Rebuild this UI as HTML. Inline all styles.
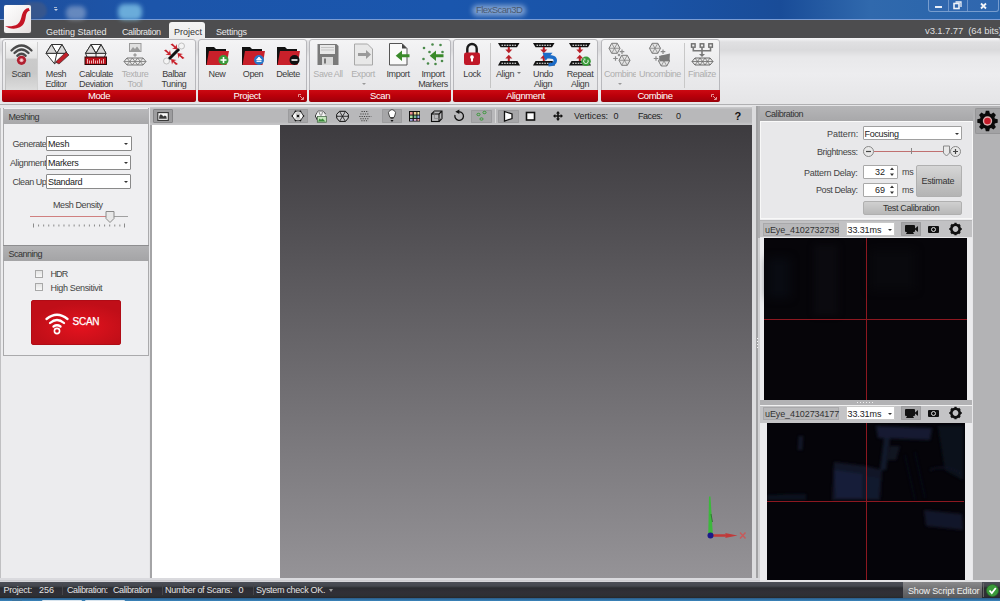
<!DOCTYPE html>
<html><head><meta charset="utf-8">
<style>
*{margin:0;padding:0;box-sizing:border-box}
html,body{width:1000px;height:601px;overflow:hidden;background:#c8c8c8;font-family:"Liberation Sans",sans-serif;font-size:10px;color:#333}
.a{position:absolute}
.t{white-space:nowrap;line-height:12px}
#title{left:0;top:0;width:1000px;height:20px;background:linear-gradient(90deg,#1f4f9c 0%,#1c55aa 15%,#1a56ad 45%,#1a53a6 65%,#194c98 78%,#3069ad 87%,#2864ab 100%);border-bottom:1px solid #7a9cd4}
#tabs{left:0;top:20px;width:1000px;height:18px;background:#4d4d4f}
#ribbon{left:0;top:37.5px;width:1000px;height:67px;border-radius:3px 3px 0 0;background:linear-gradient(#f6f6f8 0,#e0e0e2 4px,#dadadc 12px,#e8e8ea 19px,#ededef 36px,#e6e6e8 62px)}
.grp{border:1px solid #b8b8bc;border-radius:3px;background:linear-gradient(#f4f4f5,#ececee 40%,#e4e4e6)}
.rbar{background:linear-gradient(#cc0a12,#bc000a 45%,#a8000a 80%,#960008);border-radius:0 0 2px 2px}
#below{left:0;top:104px;width:1000px;height:4px;background:#e6e6e8;border-top:1px solid #b0b0b2}
#left{left:0;top:108px;width:150px;height:473px;background:#ececee;border-left:1.5px solid #c0c0c2}
#tb{left:150px;top:107px;width:602px;height:18px;background:linear-gradient(#c8c8ca 0,#c8c8ca 1px,#b8b8ba 2px,#b8b8ba 15px,#c4c4c6 17px)}
#white{left:151.5px;top:125px;width:128.5px;height:453px;background:#fff}
#vp{left:280px;top:125px;width:472px;height:453px;background:linear-gradient(#3d3b3f,#959397)}
#split{left:752px;top:107px;width:8px;height:474px;background:#c5c5c7}
#right{left:760px;top:106px;width:213px;height:475px;background:#e8e8ea}
#gearcol{left:973px;top:106px;width:27px;height:475px;background:#b3b3b5}
#status{left:0;top:581px;width:1000px;height:17px;background:#2c2c2e;color:#e6e6e6}
#task{left:0;top:598px;width:1000px;height:3px;background:#1d4f7a}
.cb{background:#fff;border:1px solid #8a8a8a;border-radius:1px}
.arr{width:0;height:0;border-left:2px solid transparent;border-right:2px solid transparent;border-top:2px solid #333}
.pb{background:#a6a6a8;border-radius:1px;box-shadow:inset 0 0 0 1px #9c9c9e}
</style></head><body>
<div id="title" class="a"></div>
<div id="tabs" class="a"></div>
<div id="ribbon" class="a"></div>
<!-- TITLE -->
<div class="a" style="left:22px;top:2px;width:25px;height:17px;border-radius:9px;background:rgba(70,90,130,.6);filter:blur(.8px)"></div>
<div class="a" style="left:53.5px;top:9px;width:0;height:0;border-left:2px solid transparent;border-right:2px solid transparent;border-top:2px solid #c8d4e6"></div>
<div class="a" style="left:54px;top:7px;width:3px;height:1px;background:#a8b8d0"></div>
<div class="a" style="left:66px;top:6px;width:20px;height:14px;border-radius:6px;background:rgba(190,205,225,.45);filter:blur(2px)"></div>
<div class="a" style="left:118px;top:4px;width:24px;height:16px;border-radius:6px;background:rgba(140,210,240,.7);filter:blur(2px)"></div>
<div class="a" style="left:472px;top:4.5px;width:54px;height:11px;border-radius:6px;background:rgba(225,235,248,.5);filter:blur(2.5px)"></div>
<div class="a" style="left:476px;top:4px;font-size:9.5px;color:#4a5a70;letter-spacing:-.55px">FlexScan3D</div>
<div class="a" style="left:928px;top:-1px;width:71px;height:13px;border:1px solid rgba(150,180,220,.7);border-top:none;border-radius:0 0 3px 3px;background:rgba(60,110,180,.35)"></div>
<div class="a" style="left:948px;top:0;width:1px;height:11px;background:rgba(150,180,220,.6)"></div>
<div class="a" style="left:967px;top:0;width:1px;height:11px;background:rgba(150,180,220,.6)"></div>
<div class="a" style="left:935px;top:6px;width:7px;height:2px;background:#e8eef8"></div>
<svg class="a" style="left:950px;top:0" width="40" height="12" viewBox="950 0 40 12"><rect x="954" y="3.5" width="5" height="5" fill="none" stroke="#eef2f8" stroke-width="1.6"/><path d="M955.5 2 h5.5 v5" fill="none" stroke="#eef2f8" stroke-width="1.3"/><path d="M981 3.5 L986 8.5 M986 3.5 L981 8.5" stroke="#f2f4f8" stroke-width="1.8"/></svg>
<!-- logo -->
<div class="a" style="left:4px;top:5px;width:27px;height:28px;border-radius:2px;background:linear-gradient(135deg,#fff,#f0eeee 60%,#e4dede);box-shadow:0 0 1px #888"></div>
<svg class="a" style="left:4px;top:5px" width="27" height="28" viewBox="0 0 27 28"><path d="M24.8 3 C21.5 3.3,19.2 5.8,18 9.8 C17 13.5,16.5 16.8,13.5 19.2 C10 21.5,5 21.5,1 21 C4.5 23.5,10.5 24.8,15.8 22.3 C20.3 20,21.2 15.5,21.8 11.5 C22.3 8.2,23.3 6.3,26 5.5 C25.3 5,25 4.2,24.8 3 Z" fill="#c41424"/></svg>
<!-- TABS -->
<div class="a" style="left:46px;top:26.5px;font-size:9px;color:#e8e8e8">Getting Started</div>
<div class="a" style="left:122px;top:26.5px;font-size:9px;color:#e8e8e8;letter-spacing:-.4px">Calibration</div>
<div class="a" style="left:169px;top:22px;width:36px;height:17px;border-radius:3px 3px 0 0;background:linear-gradient(#f4f4f4,#ececec)"></div>
<div class="a" style="left:174px;top:26.5px;font-size:9px;color:#333">Project</div>
<div class="a" style="left:216px;top:26.5px;font-size:9px;color:#e8e8e8;letter-spacing:-.2px">Settings</div>
<div class="a" style="left:925px;top:24.5px;font-size:9.5px;color:#dedede;white-space:pre;letter-spacing:-.1px">v3.1.7.77  (64 bits)</div>

<div class="a grp" style="left:2px;top:39px;width:194px;height:63px"></div>
<div class="a rbar" style="left:2px;top:90px;width:194px;height:12px"></div>
<div class="a t" style="left:39.0px;top:90px;width:120px;text-align:center;font-size:9.5px;color:#fff;letter-spacing:-0.4px;">Mode</div>
<div class="a grp" style="left:198px;top:39px;width:109px;height:63px"></div>
<div class="a rbar" style="left:198px;top:90px;width:109px;height:12px"></div>
<div class="a t" style="left:187.0px;top:90px;width:120px;text-align:center;font-size:9.5px;color:#fff;letter-spacing:-0.4px;">Project</div>
<svg class="a" style="left:298px;top:94px" width="6" height="6"><path d="M.5 3v-2.5h2.5M2 2l3 3M5.5 3v2.5h-2.5" fill="none" stroke="#f0b8b8" stroke-width=".8"/></svg>
<div class="a grp" style="left:309px;top:39px;width:142px;height:63px"></div>
<div class="a rbar" style="left:309px;top:90px;width:142px;height:12px"></div>
<div class="a t" style="left:320.0px;top:90px;width:120px;text-align:center;font-size:9.5px;color:#fff;letter-spacing:-0.4px;">Scan</div>
<div class="a grp" style="left:453px;top:39px;width:145px;height:63px"></div>
<div class="a rbar" style="left:453px;top:90px;width:145px;height:12px"></div>
<div class="a t" style="left:465.5px;top:90px;width:120px;text-align:center;font-size:9.5px;color:#fff;letter-spacing:-0.4px;">Alignment</div>
<div class="a grp" style="left:601px;top:39px;width:119px;height:63px"></div>
<div class="a rbar" style="left:601px;top:90px;width:119px;height:12px"></div>
<div class="a t" style="left:595.0px;top:90px;width:120px;text-align:center;font-size:9.5px;color:#fff;letter-spacing:-0.4px;">Combine</div>
<svg class="a" style="left:711px;top:94px" width="6" height="6"><path d="M.5 3v-2.5h2.5M2 2l3 3M5.5 3v2.5h-2.5" fill="none" stroke="#f0b8b8" stroke-width=".8"/></svg>
<div class="a" style="left:4.5px;top:41.5px;width:33.5px;height:48px;background:linear-gradient(#f6f6f6,#e2e2e2 33%,#cbcbcb 36%,#c8c8c8 65%,#d6d6d6 90%,#dcdcdc);box-shadow:inset 1px 0 0 #c0c0c0,inset -1px 0 0 #d0d0d0"></div>
<svg class="a" style="left:0;top:38px" width="720" height="52" viewBox="0 38 720 52">
<defs>
<pattern id="mesh" width="4" height="4" patternUnits="userSpaceOnUse"><rect width="4" height="4" fill="#fff"/><path d="M0 0L4 4M4 0L0 4" stroke="#555" stroke-width=".8"/></pattern>
<pattern id="meshg" width="4" height="4" patternUnits="userSpaceOnUse"><rect width="4" height="4" fill="#eee"/><path d="M0 0L4 4M4 0L0 4" stroke="#999" stroke-width=".8"/></pattern>
</defs>
<!-- Scan wifi -->
<g fill="none" stroke="#4a4a4a" stroke-width="2.3" stroke-linecap="round">
<path d="M11.5 50.5 Q21.5 40.5 31.5 50.5"/><path d="M14.5 53 Q21.5 46 28.5 53"/><path d="M17.3 55.8 Q21.5 51.8 25.7 55.8"/></g>
<circle cx="21.5" cy="60.3" r="4.6" fill="#b02030"/><circle cx="21.5" cy="60.3" r="2" fill="#e8a0a8"/><circle cx="21.5" cy="60.3" r="1" fill="#f8e0e0"/>
<!-- Mesh editor -->
<g stroke="#333" stroke-width="1" fill="none">
<path d="M51.5 44.5 L62 44.5 L67 53.3 L54.5 63.8 L46 53.3 Z" fill="#fff"/>
<path d="M46 53.3 L67 53.3 M51.5 44.5 L56.8 53.3 L62 44.5 M56.8 53.3 L54.5 63.8"/>
<path d="M51.5 44.5 L46 53.3 L56.8 53.3 Z M62 44.5 L56.8 53.3 L67 53.3Z" fill="#d8d8d8"/>
</g>
<path d="M66 52 L69 55 L59 64 L55.5 62 Z" fill="#c0202a" stroke="#222" stroke-width=".6"/>
<!-- Calc deviation -->
<g stroke="#333" stroke-width="1" fill="none">
<path d="M91 44.5 L101 44.5 L106 53.3 L85.5 53.3 Z" fill="#fff"/>
<path d="M91 44.5 L85.5 53.3 L96 53.3 Z M101 44.5 L96 53.3 L106 53.3Z" fill="#d8d8d8"/>
<path d="M91 44.5 L96 53.3 L101 44.5"/>
<path d="M85.5 53.3 L87 57 M106 53.3 L104.5 57 M96 53.3 L96 57"/>
</g>
<rect x="85" y="57" width="21.5" height="7.5" fill="#b8101a" stroke="#2a0808" stroke-width="1"/>
<path d="M87.5 59v4.5M89.5 60.5v3M91.5 60.5v3M93.5 59v4.5M95.5 60.5v3M97.5 60.5v3M99.5 59v4.5M101.5 60.5v3M103.5 59v4.5" stroke="#fae0e0" stroke-width=".8"/>
<!-- Texture tool -->
<rect x="129.5" y="43.5" width="11.5" height="8" fill="#e0e0e0" stroke="#9a9a9a"/>
<path d="M130 51 L133 47 L135 49 L137 46.5 L140.5 51Z" fill="#9a9a9a"/>
<path d="M135 53 L137 55 L135 57 L133 55Z" fill="#a0a0a0"/>
<path d="M124 61.5 l3 -3.5 h16 l3 3.5 -3 3.5 h-16z" fill="#e8e8e8" stroke="#767676" stroke-width="1"/><path d="M124 61.5h22M127.00 58.0l2.67 3.5l-2.67 3.5M132.33 58.0l-2.67 3.5l2.67 3.5M132.33 58.0l2.67 3.5l-2.67 3.5M137.67 58.0l-2.67 3.5l2.67 3.5M137.67 58.0l2.67 3.5l-2.67 3.5M143.00 58.0l-2.67 3.5l2.67 3.5" stroke="#767676" stroke-width=".8" fill="none"/>
<!-- Balbar -->
<circle cx="181.5" cy="46" r="3" fill="#f4f4f4" stroke="#aaa" stroke-width=".7"/>
<circle cx="166.5" cy="61" r="3" fill="#f4f4f4" stroke="#aaa" stroke-width=".7"/>
<path d="M179 49 L169 59" stroke="#111" stroke-width="3"/>
<g fill="#c8202a">
<path d="M170.5 44.5 l2 -1 l3 3 l1-2.5 l1 5.5 l-5.5 -1 l2.5-1z"/>
<path d="M164 50.5 l2 -1 l3 3 l1-2.5 l1 5.5 l-5.5 -1 l2.5-1z"/>
<path d="M184.5 58 l-2 1 l-3 -3 l-1 2.5 l-1 -5.5 l5.5 1 l-2.5 1z"/>
<path d="M178 64 l-2 1 l-3 -3 l-1 2.5 l-1 -5.5 l5.5 1 l-2.5 1z"/>
</g>
<!-- Folders -->
<g>
<path d="M206 47 h8 l2 2 h10 v16 h-20z" fill="#111"/>
<path d="M209 51 h20 l-2.5 14 h-20z" fill="#c8202a"/>
<circle cx="223.5" cy="60" r="5" fill="#3a9a3a"/><path d="M223.5 57v6M220.5 60h6" stroke="#fff" stroke-width="1.6"/>
<path d="M242 47 h8 l2 2 h10 v16 h-20z" fill="#111"/>
<path d="M245 51 h20 l-2.5 14 h-20z" fill="#c8202a"/>
<circle cx="259" cy="60" r="5" fill="#2a78c8"/><path d="M256.5 60 L259 57 L261.5 60Z M256.5 61.5h5" stroke="#fff" fill="#fff" stroke-width=".9"/>
<path d="M277 47 h8 l2 2 h10 v16 h-20z" fill="#111"/>
<path d="M280 51 h20 l-2.5 14 h-20z" fill="#c8202a"/>
<circle cx="294.5" cy="60" r="5" fill="#111"/><path d="M291.5 60h6" stroke="#fff" stroke-width="1.6"/>
</g>
<!-- Save all floppy -->
<path d="M317.5 44 h19 l2 2 v19 h-21z" fill="#7a7a7a"/>
<rect x="320" y="45" width="15" height="9" fill="#e8e8e8"/>
<path d="M321 47.5h13M321 50h13" stroke="#bbb" stroke-width=".8"/>
<rect x="322" y="57" width="11" height="8" fill="#d8d8d8"/><rect x="324" y="58.5" width="2" height="5" fill="#777"/>
<!-- Export doc -->
<path d="M354.5 44 h13 l5 5 v16 h-18z" fill="#e8e8e8" stroke="#a8a8a8"/>
<path d="M358 53 h8 v-3 l5 4.5 -5 4.5 v-3 h-8z" fill="#9a9a9a"/>
<!-- Import doc -->
<path d="M389.5 43.5 h12.5 l5 5 v16.5 h-17.5z" fill="#fafafa" stroke="#555" stroke-width="1"/>
<path d="M402 43.5 v5 h5z" fill="#444"/>
<path d="M409.5 54.3 h-7.5 v-3.8 l-6.3 5.3 6.3 5.3 v-3.8 h7.5z" fill="#3a8a2a"/>
<!-- Import markers -->
<g fill="#4a8a4a"><circle cx="432.5" cy="44.5" r="1.3"/><circle cx="440.5" cy="45" r="1.3"/><circle cx="424" cy="48" r="1.3"/><circle cx="429.5" cy="52" r="1.3"/><circle cx="442.5" cy="52" r="1.3"/><circle cx="423.5" cy="59" r="1.3"/><circle cx="428" cy="63.5" r="1.3"/><circle cx="435.5" cy="64" r="1.3"/><circle cx="442" cy="61" r="1.3"/></g>
<path d="M443.5 54.3 h-7.5 v-3.8 l-6.3 5.3 6.3 5.3 v-3.8 h7.5z" fill="#3a8a2a"/>
<!-- Lock -->
<path d="M467.3 53 v-4.3 a4.7 4.7 0 0 1 9.4 0 v4.3" fill="none" stroke="#1a1a1a" stroke-width="2.4"/>
<rect x="464" y="52.5" width="16" height="12.5" rx="2.2" fill="#c01828"/>
<path d="M472 55.3 a1.9 1.9 0 0 1 1 3.5 v2.7 h-2 v-2.7 a1.9 1.9 0 0 1 1 -3.5z" fill="#fff"/>
<!-- Align icons -->
<g id="alg">
<path d="M498 43 h21.5 l-2.5 4.3 h-16.5z" fill="#111"/>
<path d="M501.5 45.2 h14.5" stroke="#fff" stroke-width="1.1" stroke-dasharray="1.6 1"/>
<path d="M500.5 61 h17 l2.5 4.5 h-22z" fill="#111"/>
<path d="M501.5 63.3 h15" stroke="#fff" stroke-width="1.1" stroke-dasharray="1.6 1"/>
<path d="M508.8 47v3" stroke="#b82028" stroke-width="2"/><path d="M505.3 49.5 h7 l-3.5 3.7z" fill="#b82028"/>
<path d="M508.8 58v3" stroke="#b82028" stroke-width="2"/><path d="M505.3 58.5 h7 l-3.5 -3.7z" fill="#b82028"/>
</g>
<use href="#alg" x="35"/>
<use href="#alg" x="71"/>
<path d="M542.5 52.8 L552.5 52.8 L545.5 60.8Z" fill="#1c6cc8"/><path d="M547.5 56.8 Q555.5 56.3 555.3 60.8 Q555 64.5 548.5 64.8" fill="none" stroke="#1c6cc8" stroke-width="3.4"/>
<circle cx="586" cy="61.3" r="4.8" fill="#3a9a3a"/><path d="M584 59.8 a2.3 2.3 0 1 0 3.8 0" fill="none" stroke="#d8f0d8" stroke-width="1.1"/><path d="M583.2 58.5 h2.2 v2.2z" fill="#d8f0d8"/>
<!-- Combine -->
<g stroke="#7a7a7a" stroke-width="1" fill="#e4e4e4">
<path d="M609 48.3 l2.7-5h5.6l2.7 5-2.7 5h-5.6z"/><path d="M609 48.3h11M611.7 43.3l5.6 10M617.3 43.3l-5.6 10" stroke-width=".7"/>
<path d="M619 60.3 l2.7-5h5.6l2.7 5-2.7 5h-5.6z"/><path d="M619 60.3h11M621.7 55.3l5.6 10M627.3 55.3l-5.6 10" stroke-width=".7"/>
<path d="M649.5 48.3 l2.7-5h5.6l2.7 5-2.7 5h-5.6z"/><path d="M649.5 48.3h11M652.2 43.3l5.6 10M657.8 43.3l-5.6 10" stroke-width=".7"/>
<path d="M658.5 61 l2.7-5h5.6l2.7 5-2.7 5h-5.6z"/><path d="M658.5 61h11M661.2 56l5.6 10M666.8 56l-5.6 10" stroke-width=".7"/>
</g>
<path d="M622 49.5v4.5M619.7 51.7h4.6M615.5 56.3v4.5M613.2 58.5h4.6M663 49.5v4.5M660.7 51.7h4.6M656 56.3v4.5M653.7 58.5h4.6" stroke="#8a8a8a" stroke-width="1.2"/>
<path d="M619 53.5 l1.5 1.5 -1.5 1.5 -1.5 -1.5z" fill="#8a8a8a"/>
<path d="M659 56 L670 53.5 L669.5 61 L660 61 Z" fill="#7a7a7a"/>
<!-- Finalize -->
<g fill="#ececec" stroke="#6e6e6e" stroke-width="1.4">
<rect x="691.5" y="43.8" width="3.6" height="3.4"/><rect x="700.2" y="43.8" width="3.6" height="3.4"/><rect x="708.8" y="43.8" width="3.6" height="3.4"/></g>
<path d="M693.3 47.5v3.3h17.2v-3.3M702 47.5v7" fill="none" stroke="#777" stroke-width="1.6"/>
<path d="M699 54h6l-3 3z" fill="#777"/>
<path d="M692 61.5 l3 -3.5 h15 l3 3.5 -3 3.5 h-15z" fill="#e8e8e8" stroke="#6a6a6a" stroke-width="1"/><path d="M692 61.5h21M695.00 58.0l2.50 3.5l-2.50 3.5M700.00 58.0l-2.50 3.5l2.50 3.5M700.00 58.0l2.50 3.5l-2.50 3.5M705.00 58.0l-2.50 3.5l2.50 3.5M705.00 58.0l2.50 3.5l-2.50 3.5M710.00 58.0l-2.50 3.5l2.50 3.5" stroke="#6a6a6a" stroke-width=".8" fill="none"/>
</svg>
<div class="a t" style="left:-39px;top:68px;width:120px;text-align:center;font-size:9px;color:#3c3c3c;letter-spacing:-0.4px;">Scan</div>
<div class="a t" style="left:-4px;top:68px;width:120px;text-align:center;font-size:9px;color:#3c3c3c;letter-spacing:-0.4px;">Mesh</div>
<div class="a t" style="left:-4px;top:78px;width:120px;text-align:center;font-size:9px;color:#3c3c3c;letter-spacing:-0.4px;">Editor</div>
<div class="a t" style="left:36px;top:68px;width:120px;text-align:center;font-size:9px;color:#3c3c3c;letter-spacing:-0.4px;">Calculate</div>
<div class="a t" style="left:36px;top:78px;width:120px;text-align:center;font-size:9px;color:#3c3c3c;letter-spacing:-0.4px;">Deviation</div>
<div class="a t" style="left:75px;top:68px;width:120px;text-align:center;font-size:9px;color:#aeaeae;letter-spacing:-0.4px;">Texture</div>
<div class="a t" style="left:75px;top:78px;width:120px;text-align:center;font-size:9px;color:#aeaeae;letter-spacing:-0.4px;">Tool</div>
<div class="a t" style="left:114px;top:68px;width:120px;text-align:center;font-size:9px;color:#3c3c3c;letter-spacing:-0.4px;">Balbar</div>
<div class="a t" style="left:114px;top:78px;width:120px;text-align:center;font-size:9px;color:#3c3c3c;letter-spacing:-0.4px;">Tuning</div>
<div class="a t" style="left:157px;top:68px;width:120px;text-align:center;font-size:9px;color:#3c3c3c;letter-spacing:-0.4px;">New</div>
<div class="a t" style="left:193px;top:68px;width:120px;text-align:center;font-size:9px;color:#3c3c3c;letter-spacing:-0.4px;">Open</div>
<div class="a t" style="left:228px;top:68px;width:120px;text-align:center;font-size:9px;color:#3c3c3c;letter-spacing:-0.4px;">Delete</div>
<div class="a t" style="left:268px;top:68px;width:120px;text-align:center;font-size:9px;color:#aeaeae;letter-spacing:-0.4px;">Save All</div>
<div class="a t" style="left:303px;top:68px;width:120px;text-align:center;font-size:9px;color:#aeaeae;letter-spacing:-0.4px;">Export</div>
<div class="a" style="left:362px;top:83px;border-left:2px solid transparent;border-right:2px solid transparent;border-top:2px solid #999"></div>
<div class="a t" style="left:338px;top:68px;width:120px;text-align:center;font-size:9px;color:#3c3c3c;letter-spacing:-0.4px;">Import</div>
<div class="a t" style="left:373px;top:68px;width:120px;text-align:center;font-size:9px;color:#3c3c3c;letter-spacing:-0.4px;">Import</div>
<div class="a t" style="left:373px;top:78px;width:120px;text-align:center;font-size:9px;color:#3c3c3c;letter-spacing:-0.4px;">Markers</div>
<div class="a t" style="left:412px;top:68px;width:120px;text-align:center;font-size:9px;color:#3c3c3c;letter-spacing:-0.4px;">Lock</div>
<div class="a" style="left:490px;top:43px;width:1px;height:45px;background:#c4c4c4"></div>
<div class="a t" style="left:445px;top:68px;width:120px;text-align:center;font-size:9px;color:#3c3c3c;letter-spacing:-0.4px;">Align</div>
<div class="a" style="left:517px;top:72px;border-left:2px solid transparent;border-right:2px solid transparent;border-top:2px solid #777"></div>
<div class="a t" style="left:483px;top:68px;width:120px;text-align:center;font-size:9px;color:#3c3c3c;letter-spacing:-0.4px;">Undo</div>
<div class="a t" style="left:483px;top:78px;width:120px;text-align:center;font-size:9px;color:#3c3c3c;letter-spacing:-0.4px;">Align</div>
<div class="a t" style="left:520px;top:68px;width:120px;text-align:center;font-size:9px;color:#3c3c3c;letter-spacing:-0.4px;">Repeat</div>
<div class="a t" style="left:520px;top:78px;width:120px;text-align:center;font-size:9px;color:#3c3c3c;letter-spacing:-0.4px;">Align</div>
<div class="a t" style="left:604px;top:68px;width:32px;overflow:hidden;white-space:nowrap;font-size:9px;color:#aeaeae;letter-spacing:-.4px">Combine</div>
<div class="a" style="left:618px;top:83px;border-left:2px solid transparent;border-right:2px solid transparent;border-top:2px solid #999"></div>
<div class="a t" style="left:600px;top:68px;width:120px;text-align:center;font-size:9px;color:#aeaeae;letter-spacing:-0.4px;">Uncombine</div>
<div class="a" style="left:684px;top:43px;width:1px;height:45px;background:#c8c8c8"></div>
<div class="a t" style="left:642px;top:68px;width:120px;text-align:center;font-size:9px;color:#aeaeae;letter-spacing:-0.4px;">Finalize</div>

<div id="below" class="a"></div>
<div id="left" class="a"></div>
<!-- Meshing panel -->
<div class="a" style="left:3px;top:108px;width:146px;height:138px;border:1px solid #aaaaac;border-top:none;border-bottom:none;background:#efeff1"></div>
<div class="a" style="left:3px;top:109px;width:146px;height:14.5px;background:linear-gradient(#b8b8ba,#a8a8aa)"></div>
<div class="a t" style="left:8.5px;top:110.5px;font-size:9px;color:#333;letter-spacing:-.5px">Meshing</div>
<div class="a t" style="left:12.5px;top:137.5px;font-size:9px;color:#444;letter-spacing:-.45px">Generate</div>
<div class="a t" style="left:10px;top:156.5px;font-size:9px;color:#444;letter-spacing:-.4px">Alignment</div>
<div class="a t" style="left:12.5px;top:175.5px;font-size:9px;color:#444;letter-spacing:-.45px">Clean Up</div>
<div class="a cb" style="left:46px;top:136px;width:86px;height:15px"></div>
<div class="a cb" style="left:46px;top:155px;width:85px;height:15px"></div>
<div class="a cb" style="left:46px;top:174px;width:85px;height:15px"></div>
<div class="a t" style="left:48px;top:137.5px;font-size:9px;color:#222;letter-spacing:-.2px">Mesh</div>
<div class="a t" style="left:48px;top:156.5px;font-size:9px;color:#222;letter-spacing:-.3px">Markers</div>
<div class="a t" style="left:48px;top:175.5px;font-size:9px;color:#222;letter-spacing:-.3px">Standard</div>
<div class="a arr" style="left:124px;top:142.5px"></div>
<div class="a arr" style="left:123.5px;top:161.5px"></div>
<div class="a arr" style="left:123.5px;top:180.5px"></div>
<div class="a t" style="left:53px;top:199px;font-size:9px;color:#444;letter-spacing:-.4px">Mesh Density</div>
<div class="a" style="left:30px;top:216px;width:76px;height:1px;background:#d08080"></div>
<div class="a" style="left:106px;top:216px;width:22px;height:1px;background:#a0a0a0"></div>
<svg class="a" style="left:105px;top:210px" width="10" height="14"><path d="M1 1.5h8v7l-4 4-4-4z" fill="#e8e8e8" stroke="#8a8a8a" stroke-width="1"/></svg>
<svg class="a" style="left:30px;top:223px" width="100" height="5"><g stroke="#8a8a8a" stroke-width="1"><path d="M3.5 0.5v4M94.5 0.5v4"/><path d="M8.58 1.5v2M13.66 1.5v2M18.74 1.5v2M23.82 1.5v2M28.90 1.5v2M33.98 1.5v2M39.06 1.5v2M44.14 1.5v2M49.22 1.5v2M54.30 1.5v2M59.38 1.5v2M64.46 1.5v2M69.54 1.5v2M74.62 1.5v2M79.70 1.5v2M84.78 1.5v2M89.86 1.5v2"/></g></svg>
<!-- Scanning panel -->
<div class="a" style="left:3px;top:244px;width:146px;height:112px;border:1px solid #aaaaac;border-top:none;background:#efeff1"></div>
<div class="a" style="left:3px;top:245px;width:146px;height:16px;background:linear-gradient(#b2b2b4,#a4a4a6);border-top:1px solid #8e8e90"></div>
<div class="a t" style="left:8.5px;top:248px;font-size:9px;color:#333;letter-spacing:-.5px">Scanning</div>
<div class="a" style="left:35px;top:269.5px;width:8px;height:8px;border:1px solid #a8a8a8;background:linear-gradient(#e4e4e4,#f8f8f8)"></div>
<div class="a" style="left:35px;top:283px;width:8px;height:8px;border:1px solid #a8a8a8;background:linear-gradient(#e4e4e4,#f8f8f8)"></div>
<div class="a t" style="left:50.5px;top:268px;font-size:9px;color:#444;letter-spacing:-.9px">HDR</div>
<div class="a t" style="left:50.5px;top:281.5px;font-size:9px;color:#444;letter-spacing:-.35px">High Sensitivit</div>
<div class="a" style="left:31px;top:300px;width:90px;height:45px;border-radius:2px;background:radial-gradient(ellipse 55% 55% at 55% 60%,#e4121e,#cc101a 65%,#c00e18);border:1px solid #b00c16"></div>
<svg class="a" style="left:44px;top:310px" width="28" height="26" viewBox="0 0 28 26"><g fill="none" stroke="#fff" stroke-width="2.3" stroke-linecap="round"><path d="M2.5 9 Q13 0.5 23.5 9"/><path d="M6 13 Q13 7 20 13"/><path d="M9.5 16.5 Q13 14 16.5 16.5"/></g><circle cx="13" cy="21" r="2.6" fill="none" stroke="#fff" stroke-width="1.6"/></svg>
<div class="a t" style="left:72.5px;top:316px;font-size:10px;color:#fff;letter-spacing:-.25px;-webkit-text-stroke:.25px #fff">SCAN</div>
<div class="a" style="left:149px;top:107px;width:1px;height:471px;background:#e6e6e8"></div><div class="a" style="left:150px;top:125px;width:1.5px;height:453px;background:#a4a4a6"></div>

<div id="tb" class="a"></div>
<div id="white" class="a"></div>
<div id="vp" class="a"></div>
<div class="a" style="left:152.7px;top:109.2px;width:20.3px;height:13.5px;background:#9c9c9e;border:1px solid #858587;border-radius:1px"></div>
<svg class="a" style="left:157px;top:112px" width="12" height="9" viewBox="157 112 12 9"><rect x="157.8" y="112.6" width="10.5" height="7.8" fill="#fafafa" stroke="#333" stroke-width="1.1"/><path d="M159 118.8 L159.5 115.5 L160.8 114.3 L162.3 115.3 L163.5 116.5 L164.8 115.5 L166.3 116.3 L166.8 118.8Z" fill="#3a3a3a"/></svg>
<div class="a pb" style="left:288px;top:109px;width:20px;height:13.5px"></div>
<svg class="a" style="left:150px;top:106px" width="602" height="19" viewBox="150 106 602 19">
<!-- hex mesh pressed -->
<path d="M292.2 116 L295.4 111.2 L300.5 111.2 L303.6 116 L300.5 120.6 L295.4 120.6Z" fill="#fafafa" stroke="#222" stroke-width=".9"/>
<rect x="296.8" y="111.6" width="2.4" height="8.6" fill="#cfcfcf"/>
<path d="M295.4 111.2 L296.8 116 L295.4 120.6 M300.5 111.2 L299.2 116 L300.5 120.6" stroke="#777" stroke-width=".5" fill="none"/>
<circle cx="298" cy="116" r="1.2" fill="#111"/>
<g fill="#111"><circle cx="292.2" cy="116" r=".8"/><circle cx="303.6" cy="116" r=".8"/><circle cx="295.4" cy="111.2" r=".8"/><circle cx="300.5" cy="111.2" r=".8"/><circle cx="295.4" cy="120.6" r=".8"/><circle cx="300.5" cy="120.6" r=".8"/></g>
<!-- green image hex -->
<path d="M315.3 116 L318 111.2 L323 111.2 L325.5 114" fill="#f4f4f4" stroke="#222" stroke-width=".9"/>
<path d="M315.3 116 L317.5 120.5" stroke="#222" stroke-width=".9" fill="none"/>
<path d="M316 116 L318 111.5 L323 111.5 L325 115 L325 117 L316 117Z" fill="#f4f4f4"/>
<path d="M319 112 l1.5 3.5 M322.5 112 l-1 3.5" stroke="#444" stroke-width=".6"/>
<rect x="317.3" y="116.6" width="9" height="5.6" fill="#c8e8c0" stroke="#3a5a3a" stroke-width=".7"/>
<path d="M318 121.5 L319.5 118.5 L321 119.8 L322.5 118.5 L325.5 121.5Z" fill="#3a8a3a"/>
<!-- wheel -->
<path d="M339.5 111.3 h6 l2.8 3 v3.7 l-2.8 3.4 h-6 l-2.8 -3.4 v-3.7z" fill="#c8c8ca" stroke="#111" stroke-width="1"/>
<path d="M336.8 116.3h11.5M339.6 111.5l5.8 9.8M345.4 111.5l-5.8 9.8" stroke="#111" stroke-width=".8"/>
<!-- dotted grid -->
<g stroke="#444" stroke-width="1.1" stroke-dasharray="1.2 1.1"><path d="M361.5 111.5h7M360.3 114h9M359.3 116.5h12M360.3 118.7h9M361.3 120.7h7"/></g>
<!-- color grid -->
<g><rect x="409" y="111" width="11" height="10.5" fill="#111"/>
<rect x="410" y="112" width="2.6" height="2.6" fill="#e89090"/><rect x="413.8" y="112" width="2.6" height="2.6" fill="#f0d090"/><rect x="417.4" y="112" width="2" height="2.6" fill="#f0e8a0"/>
<rect x="410" y="115.5" width="2.6" height="2.6" fill="#a8e0a0"/><rect x="413.8" y="115.5" width="2.6" height="2.6" fill="#70b890"/><rect x="417.4" y="115.5" width="2" height="2.6" fill="#90b0e8"/>
<rect x="410" y="119" width="2.6" height="1.8" fill="#a0a8e8"/><rect x="413.8" y="119" width="2.6" height="1.8" fill="#e8b0e0"/><rect x="417.4" y="119" width="2" height="1.8" fill="#e8a0a0"/></g>
<!-- cube -->
<g fill="none" stroke="#111" stroke-width="1.1"><rect x="431.5" y="114" width="7.5" height="7.5"/><path d="M431.5 114 L434.5 111 L442 111 L442 118.5 L439 121.5 M439 114 L442 111"/></g>
<path d="M434.5 111 v7.5 h7.5" stroke="#777" stroke-width=".6" fill="none"/>
<!-- rotate -->
<path d="M455 115 A4.3 4.3 0 1 0 459 111.8" fill="none" stroke="#111" stroke-width="1.3"/>
<path d="M455.3 111.8 L459.3 109.6 L459.3 114Z" fill="#111"/>
<!-- green dots pressed -->
</svg>
<div class="a pb" style="left:471px;top:109.5px;width:20.5px;height:13px;background:#a8a8aa"></div>
<div class="a" style="left:495px;top:109px;width:1px;height:14px;background:#d8d8d8"></div>
<div class="a pb" style="left:498px;top:109.5px;width:21px;height:13px"></div>
<div class="a pb" style="left:382px;top:109px;width:20px;height:13.5px"></div>
<svg class="a" style="left:150px;top:106px" width="602" height="19" viewBox="150 106 602 19">
<g fill="none" stroke="#3a9a3a" stroke-width="1"><ellipse cx="478.5" cy="114.5" rx="1.6" ry="1.2"/><ellipse cx="484.5" cy="112.5" rx="1.6" ry="1.2"/><ellipse cx="481.5" cy="119" rx="1.6" ry="1.2"/></g>
<!-- bulb -->
<path d="M389 115 A3.5 3.5 0 1 1 395 115 L394 117.5 L390 117.5Z" fill="#fff" stroke="#333" stroke-width=".9"/>
<path d="M390.5 118.5h3" stroke="#333" stroke-width=".8"/>
<path d="M390.5 120h3l-1.5 2z" fill="#111"/>
<!-- play -->
<path d="M504.5 111.5 L512 114 L512 118.5 L504.5 121Z" fill="#fff" stroke="#111" stroke-width="1.3"/>
<!-- stop -->
<rect x="526.5" y="112.5" width="8" height="7.5" fill="#fff" stroke="#111" stroke-width="1.6"/>
<!-- move -->
<path d="M558 111 L560 113.5 H558.8 V115.3 H560.7 V114 L563 116 L560.7 118 V116.7 H558.8 V118.5 H560 L558 121 L556 118.5 H557.2 V116.7 H555.3 V118 L553 116 L555.3 114 V115.3 H557.2 V113.5 H556Z" fill="#111"/>
<!-- help -->
</svg>
<div class="a t" style="left:574px;top:110.3px;font-size:9px;color:#222;letter-spacing:-.05px">Vertices:</div>
<div class="a t" style="left:613.5px;top:110.3px;font-size:9px;color:#222">0</div>
<div class="a t" style="left:638px;top:110.3px;font-size:9px;color:#222;letter-spacing:-.45px">Faces:</div>
<div class="a t" style="left:676px;top:110.3px;font-size:9px;color:#222">0</div>
<div class="a t" style="left:734.5px;top:109.5px;font-size:11px;font-weight:bold;color:#111">?</div>
<!-- axis -->
<svg class="a" style="left:700px;top:490px" width="52" height="56" viewBox="700 490 52 56">
<path d="M709 496.5 L710.5 496.5 L712.8 534 L708.3 534Z" fill="#3cb83c"/>
<path d="M711 514 L712.5 522" stroke="#2a6a2a" stroke-width=".8"/>
<path d="M711 534.3 L726 534.3 L725 533 L737.5 535.5 L725 538 L726 536.8 L711 536.8Z" fill="#c03a3a"/>
<circle cx="710.5" cy="535.5" r="3" fill="#1a1a8a"/>
<path d="M740 532.5 l5.5 6 M745.5 532.5 l-5.5 6" stroke="#c85a5a" stroke-width="1.4"/>
</svg>

<div id="split" class="a"></div>
<div id="right" class="a"></div>
<div id="gearcol" class="a"></div>
<!-- splitter -->
<div class="a" style="left:752px;top:106px;width:4px;height:475px;background:#dcdcde"></div>
<div class="a" style="left:756px;top:106px;width:1.5px;height:475px;background:#a2a2a4"></div>
<div class="a" style="left:757.5px;top:106px;width:2.5px;height:475px;background:#d2d2d4"></div>
<div class="a" style="left:757.5px;top:106px;width:2.5px;height:132px;background:#acacae"></div>
<div class="a" style="left:756.5px;top:338px;width:1.5px;height:11px;background:repeating-linear-gradient(#f4f4f4 0 1.2px,transparent 1.2px 3px)"></div>
<!-- calibration panel -->
<div class="a" style="left:760px;top:106px;width:212.5px;height:15px;background:linear-gradient(#b6b6b8,#a8a8aa)"></div>
<div class="a t" style="left:765px;top:108px;font-size:9px;color:#333;letter-spacing:-.45px">Calibration</div>
<div class="a" style="left:760px;top:121px;width:212.5px;height:98px;background:#e8e8ea;border:1px solid #f8f8f8;border-top:1px solid #fafafa"></div>
<div class="a t" style="left:827px;top:128px;font-size:9px;color:#444;letter-spacing:-.05px">Pattern:</div>
<div class="a t" style="left:817px;top:145.5px;font-size:9px;color:#444;letter-spacing:-.4px">Brightness:</div>
<div class="a t" style="left:804px;top:166.5px;font-size:9px;color:#444;letter-spacing:-.25px">Pattern Delay:</div>
<div class="a t" style="left:816px;top:184px;font-size:9px;color:#444;letter-spacing:-.4px">Post Delay:</div>
<div class="a cb" style="left:862.5px;top:126px;width:99.5px;height:14px;border-color:#a0a0a0"></div>
<div class="a t" style="left:864.5px;top:127.5px;font-size:9px;color:#222;letter-spacing:-.3px">Focusing</div>
<div class="a arr" style="left:954.5px;top:132.5px"></div>
<svg class="a" style="left:860px;top:144px" width="104" height="15" viewBox="860 144 104 15">
<path d="M874 151.5 H944" stroke="#c07070" stroke-width="1"/>
<path d="M911.5 148 v6" stroke="#888" stroke-width="1"/>
<circle cx="868.5" cy="151.5" r="5" fill="#e8e8e8" stroke="#888" stroke-width="1"/>
<path d="M866 151.5h5" stroke="#444" stroke-width="1.2"/>
<circle cx="955.5" cy="151.5" r="5" fill="#e8e8e8" stroke="#888" stroke-width="1"/>
<path d="M953 151.5h5M955.5 149v5" stroke="#444" stroke-width="1.2"/>
<path d="M943.5 146 h6 v7 l-3 3 -3 -3z" fill="#e8e8e8" stroke="#888" stroke-width="1"/>
</svg>
<div class="a cb" style="left:862.5px;top:164.5px;width:35px;height:14px;border-color:#a8a8a8"></div>
<div class="a cb" style="left:862.5px;top:182.5px;width:35px;height:14px;border-color:#a8a8a8"></div>
<div class="a t" style="left:875px;top:166px;font-size:9px;color:#222">32</div>
<div class="a t" style="left:875px;top:184px;font-size:9px;color:#222">69</div>
<svg class="a" style="left:889px;top:166px" width="6" height="30"><path d="M1 4 L3 1.5 L5 4Z M1 7.5 L3 10 L5 7.5Z M1 22 L3 19.5 L5 22Z M1 25.5 L3 28 L5 25.5Z" fill="#333"/></svg>
<div class="a t" style="left:902px;top:166px;font-size:9px;color:#444;letter-spacing:-.2px">ms</div>
<div class="a t" style="left:902px;top:184px;font-size:9px;color:#444;letter-spacing:-.2px">ms</div>
<div class="a" style="left:915.5px;top:164.5px;width:46px;height:32px;border-radius:2px;background:linear-gradient(#d6d6d6,#c4c4c4 50%,#b4b4b4);border:1px solid #b0b0b0"></div>
<div class="a t" style="left:921.5px;top:174.5px;font-size:9px;color:#333;letter-spacing:-.3px">Estimate</div>
<div class="a" style="left:862.5px;top:201px;width:99px;height:14px;border-radius:2px;background:linear-gradient(#d0d0d0,#b8b8b8);border:1px solid #b0b0b0"></div>
<div class="a t" style="left:883px;top:202px;font-size:9px;color:#333;letter-spacing:-.35px">Test Calibration</div>
<!-- camera panels -->
<div class="a" style="left:760px;top:219px;width:212px;height:362px;background:#ececee"></div>
<div class="a" style="left:760px;top:219.5px;width:212px;height:18px;background:#c2c2c4;border-top:1px solid #b4b4b6"></div>
<div class="a" style="left:760px;top:237px;width:212px;height:1px;background:#e8e8ea"></div>
<div class="a" style="left:760px;top:400px;width:212px;height:4.5px;background:#b2b2b4"></div>
<div class="a" style="left:760px;top:404.5px;width:212px;height:18px;background:#c4c4c6;border-top:1px solid #f0f0f0"></div>
<div class="a" style="left:764px;top:238px;width:203px;height:162px;background:#060509"></div>
<div class="a" style="left:767px;top:423px;width:197.5px;height:156.5px;background:#050409"></div>
<div class="a" style="left:857px;top:401.5px;width:18px;height:1px;background:repeating-linear-gradient(90deg,#f0f0f0 0 1px,transparent 1px 3px)"></div>
<!-- cam1 structures -->
<div class="a" style="left:814px;top:245px;width:24px;height:70px;background:#0b0a0f;filter:blur(3px)"></div>
<div class="a" style="left:870px;top:250px;width:45px;height:40px;background:#09090d;filter:blur(4px)"></div>
<div class="a" style="left:768px;top:258px;width:22px;height:40px;background:#090b12;filter:blur(4px)"></div>
<!-- cam2 structures -->
<svg class="a" style="left:767px;top:423px" width="197" height="157" viewBox="767 423 197 157">
<defs><filter id="bl" x="-20%" y="-20%" width="140%" height="140%"><feGaussianBlur stdDeviation="1.6"/></filter></defs>
<g filter="url(#bl)" opacity=".75">
<path d="M876 426 L932 428 L930 440 L878 438Z" fill="#1a2440"/>
<path d="M884 438 L890 438 L886 470 L880 470Z" fill="#182238"/>
<path d="M834 462 L866 466 L882 470 L880 500 L832 500Z" fill="#141c30"/>
<path d="M834 470 L862 474 L862 498 L836 498Z" fill="#1c2848"/>
<path d="M866 476 L880 478 L878 498 L866 498Z" fill="#18223a"/>
<path d="M924 510 L962 514 L963 530 L926 526Z" fill="#161e34"/>
<path d="M938 426 L963 426 L963 480 L945 470Z" fill="#0e1322"/>
<path d="M905 455 L915 500 M915 452 L925 498" stroke="#10162a" stroke-width="1" fill="none"/>
<path d="M890 446 L900 446 L896 460 L888 460Z" fill="#141a2c"/>
<path d="M767 495 L806 494 L806 500 L767 500Z" fill="#111828"/>
<path d="M799 436 L803 436 L802 450 L798 450Z" fill="#1a2238"/>
<path d="M930 470 C940 465,955 468,962 475" stroke="#151c30" stroke-width="1.5" fill="none"/>
</g></svg>
<!-- crosshairs -->
<div class="a" style="left:866px;top:238px;width:1px;height:162px;background:#8c1820"></div>
<div class="a" style="left:764px;top:319px;width:203px;height:1px;background:#8c1820"></div>
<div class="a" style="left:865.5px;top:423px;width:1px;height:157px;background:#8c1820"></div>
<div class="a" style="left:767px;top:501px;width:197px;height:1px;background:#8c1820"></div>
<!-- cam headers -->
<div class="a" style="left:763px;top:222.5px;width:76px;height:13px;background:#b8b8ba;border:1px solid #a8a8aa"></div>
<div class="a t" style="left:765px;top:223.5px;font-size:9px;color:#333;letter-spacing:-.1px">uEye_4102732738</div>
<div class="a cb" style="left:845.5px;top:222px;width:49px;height:14px;border-color:#c8c8c8"></div>
<div class="a t" style="left:847.5px;top:223.5px;font-size:9px;color:#222;letter-spacing:-.1px">33.31ms</div>
<div class="a arr" style="left:888px;top:229px"></div>
<div class="a pb" style="left:901px;top:222px;width:20px;height:14px"></div>
<div class="a" style="left:763px;top:406.5px;width:76px;height:13.5px;background:#b8b8ba;border:1px solid #a8a8aa"></div>
<div class="a t" style="left:765px;top:407.5px;font-size:9px;color:#333;letter-spacing:-.1px">uEye_4102734177</div>
<div class="a cb" style="left:845.5px;top:406px;width:49px;height:14px;border-color:#c8c8c8"></div>
<div class="a t" style="left:847.5px;top:407.5px;font-size:9px;color:#222;letter-spacing:-.1px">33.31ms</div>
<div class="a arr" style="left:888px;top:413px"></div>
<div class="a pb" style="left:901px;top:406px;width:20px;height:14px"></div>
<svg class="a" style="left:900px;top:220px" width="70" height="202" viewBox="900 220 70 202">
<defs><g id="camico">
<rect x="905" y="225" width="10" height="7" rx="1" fill="#111"/><path d="M915 228.5 L918 226 V232 L915 229.5Z" fill="#111"/><path d="M907 232 h6 l1 2 h-8z" fill="#111"/>
<rect x="928" y="226" width="11" height="7" rx="1" fill="#111"/><circle cx="933.5" cy="229.5" r="2" fill="none" stroke="#ddd" stroke-width="1"/>
<g transform="translate(955.5 229)"><circle r="4.2" fill="none" stroke="#111" stroke-width="2.6"/><circle r="1.4" fill="#c0c0c2"/>
<path d="M0 -6.2 V-4 M0 6.2V4 M-6.2 0H-4 M6.2 0H4 M-4.4 -4.4 L-2.9 -2.9 M4.4 4.4 L2.9 2.9 M-4.4 4.4 L-2.9 2.9 M4.4 -4.4 L2.9 -2.9" stroke="#111" stroke-width="2.2"/></g>
</g></defs>
<use href="#camico"/><use href="#camico" y="184"/>
</svg>
<!-- gear column -->
<div class="a" style="left:974.5px;top:108px;width:25.5px;height:26px;background:#a2a2a4;border:1px solid #959597;border-right:none;border-radius:2px 0 0 2px"></div>
<svg class="a" style="left:975px;top:109px" width="25" height="25" viewBox="-12.5 -12 25 25">
<g fill="#0a0a0a"><circle r="7.8"/><path d="M-2.4 -7 L-1.7 -10.2 H1.7 L2.4 -7Z" transform="rotate(0)"/><path d="M-2.4 -7 L-1.7 -10.2 H1.7 L2.4 -7Z" transform="rotate(45)"/><path d="M-2.4 -7 L-1.7 -10.2 H1.7 L2.4 -7Z" transform="rotate(90)"/><path d="M-2.4 -7 L-1.7 -10.2 H1.7 L2.4 -7Z" transform="rotate(135)"/><path d="M-2.4 -7 L-1.7 -10.2 H1.7 L2.4 -7Z" transform="rotate(180)"/><path d="M-2.4 -7 L-1.7 -10.2 H1.7 L2.4 -7Z" transform="rotate(225)"/><path d="M-2.4 -7 L-1.7 -10.2 H1.7 L2.4 -7Z" transform="rotate(270)"/><path d="M-2.4 -7 L-1.7 -10.2 H1.7 L2.4 -7Z" transform="rotate(315)"/></g>
<circle r="4.7" fill="#dcb0b0"/><circle r="3.3" fill="#c41c2a"/>
</svg>

<div id="status" class="a"></div>
<div id="task" class="a"></div>
<div class="a" style="left:0;top:577.5px;width:760px;height:4.5px;background:linear-gradient(#dadade 0,#dadade 1.6px,#c4c4c8 2px,#d6d6da 3px)"></div>
<div class="a" style="left:760px;top:579.6px;width:240px;height:2px;background:#e4e4e6"></div>
<div class="a" style="left:0;top:581.5px;width:1000px;height:16.5px;background:linear-gradient(#4c4f57 0,#44474e 4px,#2a2c30 6px,#312f37 10px,#2e3034 14px,#24242a 16.5px)"></div>
<div class="a t" style="left:3.5px;top:584px;font-size:9px;color:#e4e4e4;letter-spacing:-.25px">Project:</div>
<div class="a t" style="left:39px;top:584px;font-size:9px;color:#e4e4e4">256</div>
<div class="a" style="left:61.5px;top:584px;width:1px;height:11px;background:#46464a"></div>
<div class="a t" style="left:67px;top:584px;font-size:9px;color:#e4e4e4;letter-spacing:-.4px">Calibration:</div>
<div class="a t" style="left:113px;top:584px;font-size:9px;color:#e4e4e4;letter-spacing:-.4px">Calibration</div>
<div class="a" style="left:161.5px;top:584px;width:1px;height:11px;background:#46464a"></div>
<div class="a t" style="left:165px;top:584px;font-size:9px;color:#e4e4e4;letter-spacing:-.3px">Number of Scans:</div>
<div class="a t" style="left:238.5px;top:584px;font-size:9px;color:#e4e4e4">0</div>
<div class="a" style="left:253px;top:584px;width:1px;height:11px;background:#46464a"></div>
<div class="a t" style="left:256px;top:584px;font-size:9px;color:#e4e4e4;letter-spacing:-.3px">System check OK.</div>
<div class="a" style="left:328.5px;top:588.5px;border-left:2.5px solid transparent;border-right:2.5px solid transparent;border-top:3px solid #999"></div>
<div class="a" style="left:903px;top:581.5px;width:79px;height:16.5px;background:linear-gradient(#8a8a8c,#6a6a6c 60%,#5a5a5c)"></div>
<div class="a t" style="left:908px;top:584.5px;font-size:9px;color:#f0f0f0;letter-spacing:-.15px">Show Script Editor</div>
<div class="a" style="left:982.5px;top:583px;width:1px;height:14px;background:#666"></div>
<svg class="a" style="left:985px;top:583px" width="15" height="15"><circle cx="7.5" cy="7.5" r="6" fill="#3a9a3a" stroke="#2a6a2a" stroke-width=".8"/><path d="M4.5 7.5 L6.8 10 L10.8 5" fill="none" stroke="#fff" stroke-width="1.8"/></svg>
<div class="a" style="left:0;top:598px;width:1000px;height:3px;background:linear-gradient(#2a5a88,#3a86bc)"></div>
<div class="a" style="left:42px;top:599.5px;width:40px;height:2px;background:#d8e4ee;border-radius:1px 1px 0 0"></div>
<div class="a" style="left:85px;top:599.5px;width:40px;height:2px;background:#d8e4ee;border-radius:1px 1px 0 0"></div>
<div class="a" style="left:12px;top:599px;width:10px;height:2px;background:#3a74a0"></div>

</body></html>
